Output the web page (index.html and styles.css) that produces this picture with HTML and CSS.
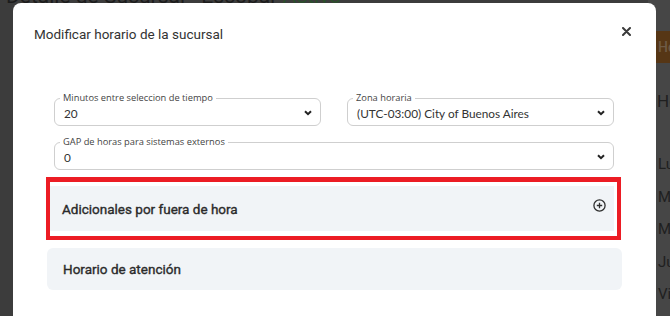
FILE: index.html
```html
<!DOCTYPE html>
<html lang="es">
<head>
<meta charset="utf-8">
<title>Modificar horario</title>
<link rel="stylesheet" href="styles.css">
</head>
<body>
<div class="page">
  <div class="main">
    <h1 class="page-title">Detalle de Sucursal - Escobar <span class="status">Activo</span></h1>
  </div>
  <aside class="side">
    <div class="side-btn">Horario</div>
    <h3 class="side-title">Horarios</h3>
    <ul class="days">
      <li>Lunes</li>
      <li>Martes</li>
      <li>Miércoles</li>
      <li>Jueves</li>
      <li>Viernes</li>
    </ul>
  </aside>
</div>

<div class="modal">
  <div class="modal-header">
    <h2 class="modal-title">Modificar horario de la sucursal</h2>
    <button class="close" aria-label="Cerrar">
      <svg width="9" height="9" viewBox="0 0 9 9"><path d="M1 1L8 8M8 1L1 8" stroke="#3a3a3a" stroke-width="2" stroke-linecap="round"/></svg>
    </button>
  </div>
  <div class="modal-body">
    <div class="fields">
      <div class="field">
        <span class="field-label">Minutos entre seleccion de tiempo</span>
        <span class="field-value">20</span>
        <svg class="chev" width="8" height="6" viewBox="0 0 8 6"><path d="M1 1.2L4 4.2L7 1.2" fill="none" stroke="#222" stroke-width="2"/></svg>
      </div>
      <div class="field">
        <span class="field-label">Zona horaria</span>
        <span class="field-value">(UTC-03:00) City of Buenos Aires</span>
        <svg class="chev" width="8" height="6" viewBox="0 0 8 6"><path d="M1 1.2L4 4.2L7 1.2" fill="none" stroke="#222" stroke-width="2"/></svg>
      </div>
      <div class="field wide">
        <span class="field-label">GAP de horas para sistemas externos</span>
        <span class="field-value">0</span>
        <svg class="chev" width="8" height="6" viewBox="0 0 8 6"><path d="M1 1.2L4 4.2L7 1.2" fill="none" stroke="#222" stroke-width="2"/></svg>
      </div>
    </div>

    <div class="highlight">
      <div class="acc acc-first">
        <span class="acc-text">Adicionales por fuera de hora</span>
        <svg class="plus" width="13" height="13" viewBox="0 0 13 13"><circle cx="6.5" cy="6.5" r="5.6" fill="none" stroke="#2f2f2f" stroke-width="1.3"/><path d="M6.5 3.8V9.2M3.8 6.5H9.2" stroke="#2f2f2f" stroke-width="1.3"/></svg>
      </div>
    </div>

    <div class="acc">
      <span class="acc-text">Horario de atención</span>
    </div>
  </div>
</div>
</body>
</html>
```
FILE: styles.css
```css
* { box-sizing: border-box; }
html, body { margin: 0; padding: 0; }
body {
  width: 670px;
  height: 316px;
  overflow: hidden;
  background: #3c3c3c;
  font-family: Roboto, "Liberation Sans", sans-serif;
}
.page {
  display: flex;
  height: 316px;
}
.main {
  width: 648px;
  padding-left: 6px;
}
.page-title {
  margin: -15px 0 0;
  font-size: 21px;
  font-weight: 400;
  color: #1c1c1c;
  line-height: 22px;
}
.status { color: #2b4f2b; }
.side {
  flex: 1;
  background: #464646;
  padding-top: 31px;
  overflow: hidden;
  white-space: nowrap;
}
.side-btn {
  background: #563615;
  color: #6e5a45;
  font-size: 14px;
  height: 32px;
  line-height: 32px;
  padding-left: 10px;
  font-weight: 500;
}
.side-title {
  margin: 28px 0 0 9px;
  font-size: 17px;
  font-weight: 400;
  color: #1f1f1f;
}
.days {
  list-style: none;
  margin: 43px 0 0 10px;
  padding: 0;
  color: #1f1f1f;
  font-size: 15px;
}
.days li { height: 32.5px; line-height: 20px; }

.modal {
  position: fixed;
  left: 13px;
  top: 3px;
  width: 643px;
  height: 340px;
  background: #fff;
  border-radius: 8px;
}
.modal-header {
  display: flex;
  justify-content: space-between;
  align-items: center;
  padding: 21px 25px 0 21px;
  height: 41px;
}
.modal-title {
  margin: 0;
  font-size: 13.5px;
  font-weight: 400;
  color: #333;
  line-height: 20px;
}
.close {
  border: 0;
  background: none;
  padding: 0;
  width: 9px;
  height: 9px;
  display: flex;
  margin-top: -5px;
}
.modal-body {
  padding: 54px 34px 0;
}
.fields {
  display: grid;
  grid-template-columns: 1fr 1fr;
  gap: 16px 26px;
  margin: 0 8px 0 7px;
}
.field {
  position: relative;
  height: 28px;
  border: 1px solid #cfcfcf;
  border-radius: 6px;
  display: flex;
  align-items: center;
  padding: 2px 8px 0 9px;
  font-family: Lato, "Open Sans", sans-serif;
}
.field.wide { grid-column: 1 / 3; }
.field-label {
  position: absolute;
  left: 5px;
  top: -7px;
  padding: 0 3px;
  background: #fff;
  font-family: "Open Sans", sans-serif;
  font-size: 9.3px;
  line-height: 12px;
  color: #444;
}
.field-value {
  flex: 1;
  font-size: 11.8px;
  color: #333;
}
.chev { flex: none; }

.highlight {
  margin-top: 7px;
  margin-left: -1px;
  margin-right: 1px;
  border: 5px solid #ec1c24;
  border-left-width: 4px;
  border-right-width: 4px;
  border-bottom-width: 4px;
  padding: 4px 3px 5px 0;
}
.acc {
  display: flex;
  align-items: center;
  justify-content: space-between;
  height: 42px;
  background: #f1f4f7;
  border-radius: 6px;
  padding: 0 14px 0 16px;
  margin-top: 8px;
}
.acc-first {
  margin-top: 0;
  height: 45px;
  border-radius: 0;
  padding: 0 8px 0 12px;
}
.acc-text {
  font-size: 13.5px;
  font-weight: 400;
  color: #2a2a2a;
  -webkit-text-stroke: 0.35px #2a2a2a;
}
.plus { margin-top: -7px; }
```
